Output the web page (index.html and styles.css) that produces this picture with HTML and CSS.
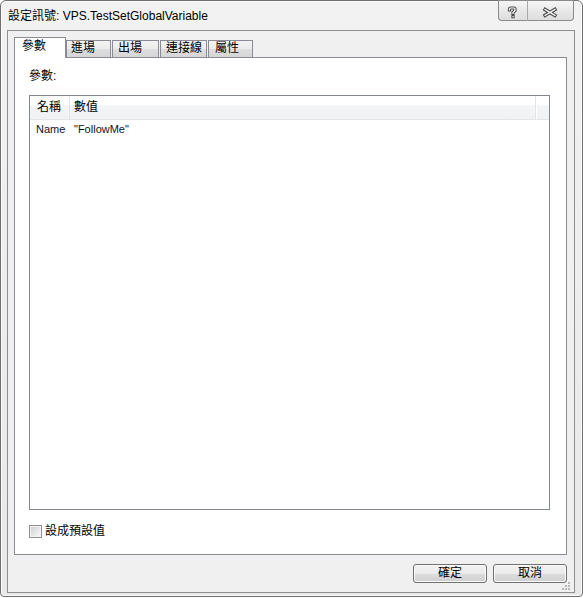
FILE: index.html
```html
<!DOCTYPE html>
<html>
<head>
<meta charset="utf-8">
<link rel="stylesheet" href="styles.css">
</head>
<body>
<div class="window">
  <div class="titlebar">
    <span class="title">設定訊號: VPS.TestSetGlobalVariable</span>
    <div class="caption-btns">
      <div class="cbtn help">
        <svg width="28" height="19" viewBox="0 0 28 19">
          <g fill="none" stroke-linecap="square" stroke-linejoin="miter">
            <path d="M10.5 9 V8 Q10.5 7 11.5 7 H15 Q16 7 16 8 V9.5 L14 11.5 V12.5 M14 15.5 V15.6" stroke="#4a4a4a" stroke-width="3.2"/>
            <path d="M10.5 9 V8 Q10.5 7 11.5 7 H15 Q16 7 16 8 V9.5 L14 11.5 V12.5 M14 15.5 V15.6" stroke="#fff" stroke-width="1.2"/>
          </g>
        </svg>
      </div>
      <div class="cbtn close">
        <svg width="46" height="19" viewBox="0 0 46 19">
          <g fill="none" stroke-linecap="square">
            <path d="M17.5 8.5 L27.5 14.5 M27.5 8.5 L17.5 14.5" stroke="#4a4a4a" stroke-width="3.6"/>
            <path d="M17.5 8.5 L27.5 14.5 M27.5 8.5 L17.5 14.5" stroke="#fff" stroke-width="1.4"/>
          </g>
        </svg>
      </div>
    </div>
  </div>
  <div class="client">
    <div class="tabs">
      <div class="tab active">參數</div>
      <div class="tab t1">進場</div>
      <div class="tab t2">出場</div>
      <div class="tab t3">連接線</div>
      <div class="tab t4">屬性</div>
    </div>
    <div class="panel">
      <div class="label">參數:</div>
      <div class="list">
        <div class="list-head">
          <div class="hcol c1">名稱</div>
          <div class="hcol c2">數值</div>
          <div class="hcol c3"></div>
        </div>
        <div class="row">
          <div class="cell c1">Name</div>
          <div class="cell c2">"FollowMe"</div>
        </div>
      </div>
      <div class="check"><span class="box"></span><span class="check-text">設成預設值</span></div>
    </div>
    <div class="buttons">
      <div class="btn">確定</div>
      <div class="btn">取消</div>
    </div>
    <svg class="grip" width="9" height="9" viewBox="0 0 9 9">
      <g fill="#b8b8b8">
        <rect x="6" y="0" width="2" height="2"/>
        <rect x="3" y="3" width="2" height="2"/><rect x="6" y="3" width="2" height="2"/>
        <rect x="0" y="6" width="2" height="2"/><rect x="3" y="6" width="2" height="2"/><rect x="6" y="6" width="2" height="2"/>
      </g>
    </svg>
  </div>
</div>
</body>
</html>
```
FILE: styles.css
```css
* { box-sizing: border-box; }
html, body { margin: 0; padding: 0; background: #ffffff; }
body {
  font-family: "Liberation Sans", "Noto Sans CJK TC", sans-serif;
  font-size: 12px;
  color: #000;
}
.window {
  width: 583px;
  height: 597px;
  border: 1px solid #6f6f6f;
  border-radius: 6px 6px 4px 4px;
  background: linear-gradient(#f2f2f2, #e8e8e8);
  box-shadow: inset 0 0 0 1px #fbfbfb;
  padding: 0 7px 3px 6px;
  display: flex;
  flex-direction: column;
}
.titlebar {
  height: 29px;
  display: flex;
  justify-content: space-between;
  align-items: flex-start;
}
.title {
  margin: 8px 0 0 1px;
  line-height: 15px;
  font-size: 12px;
  color: #000;
  white-space: nowrap;
}
.caption-btns {
  display: flex;
  margin-top: -1px;
  margin-right: 1px;
}
.cbtn {
  height: 21px;
  border: 1px solid #8b8b8b;
  background: linear-gradient(#f6f6f6, #e6e6e6 60%, #dedede);
  display: flex;
  align-items: center;
  justify-content: center;
}
.cbtn svg { display: block; }
.help {
  width: 29px;
  border-radius: 0 0 0 4px;
  border-right: none;
}
.close {
  width: 47px;
  border-radius: 0 0 4px 0;
  border-left: 1px solid #a8a8a8;
}
.client {
  position: relative;
  height: 563px;
  border: 1px solid #8e8e8e;
  background: #f0f0f0;
  display: flex;
  flex-direction: column;
}
.tabs {
  position: relative;
  z-index: 1;
  display: flex;
  align-items: flex-end;
  height: 20px;
  margin: 6px 0 0 6px;
}
.tab {
  height: 17px;
  border: 1px solid #898c95;
  border-bottom: none;
  background: linear-gradient(#f3f3f3, #ebebeb 50%, #dedede 51%, #d6d6d6);
  line-height: 15px;
  padding-left: 5px;
  white-space: nowrap;
}
.tab.active {
  width: 52px;
  height: 21px;
  margin-bottom: -1px;
  background: #ffffff;
  padding-left: 7px;
  line-height: 17px;
}
.t1 { width: 45px; padding-left: 4px; }
.t2 { width: 47px; margin-left: 1px; }
.t3 { width: 47px; margin-left: 1px; }
.t4 { width: 45px; margin-left: 1px; padding-left: 6px; }
.panel {
  height: 498px;
  margin: 0 7px 0 6px;
  border: 1px solid #898c95;
  background: #ffffff;
  padding: 11px 15px 0 14px;
  display: flex;
  flex-direction: column;
}
.label {
  line-height: 15px;
  height: 15px;
}
.list {
  margin-top: 11px;
  width: 521px;
  height: 415px;
  border: 1px solid #828790;
  background: #ffffff;
}
.list-head {
  display: flex;
  height: 24px;
  border-bottom: 1px solid #e5e5e5;
  background: linear-gradient(#ffffff 0%, #ffffff 40%, #f3f4f6 42%, #f1f2f4 100%);
}
.hcol {
  line-height: 23px;
  height: 23px;
}
.hcol.c1 {
  width: 40px;
  padding-left: 7px;
  border-right: 1px solid #e3e4e6;
}
.hcol.c2 {
  width: 466px;
  padding-left: 4px;
  border-right: 1px solid #e3e4e6;
  box-shadow: 1px 0 0 #ffffff;
}
.hcol.c3 { flex: 1; }
.row {
  display: flex;
  height: 19px;
  line-height: 19px;
  font-size: 11px;
  color: #10102a;
}
.cell.c1 { width: 40px; padding-left: 6px; }
.cell.c2 { padding-left: 4px; }
.check {
  margin-top: 15px;
  display: flex;
  align-items: center;
  height: 13px;
}
.box {
  width: 13px;
  height: 13px;
  border: 1px solid #8e8f8f;
  background: linear-gradient(135deg, #c9ccd1, #eeeeef 70%, #f6f6f6);
  box-shadow: inset 0 0 0 1px #f4f4f4;
}
.check-text {
  margin-left: 3px;
  line-height: 15px;
}
.buttons {
  display: flex;
  justify-content: flex-end;
  gap: 6px;
  margin: 9px 7px 0 0;
}
.btn {
  width: 74px;
  height: 19px;
  border: 1px solid #707070;
  border-radius: 3px;
  background: linear-gradient(#f2f2f2 0%, #ebebeb 50%, #dddddd 51%, #cfcfcf 100%);
  box-shadow: inset 0 0 0 1px #fbfbfb;
  text-align: center;
  line-height: 17px;
}
.grip {
  position: absolute;
  right: 3px;
  bottom: 1px;
  display: block;
}
```
